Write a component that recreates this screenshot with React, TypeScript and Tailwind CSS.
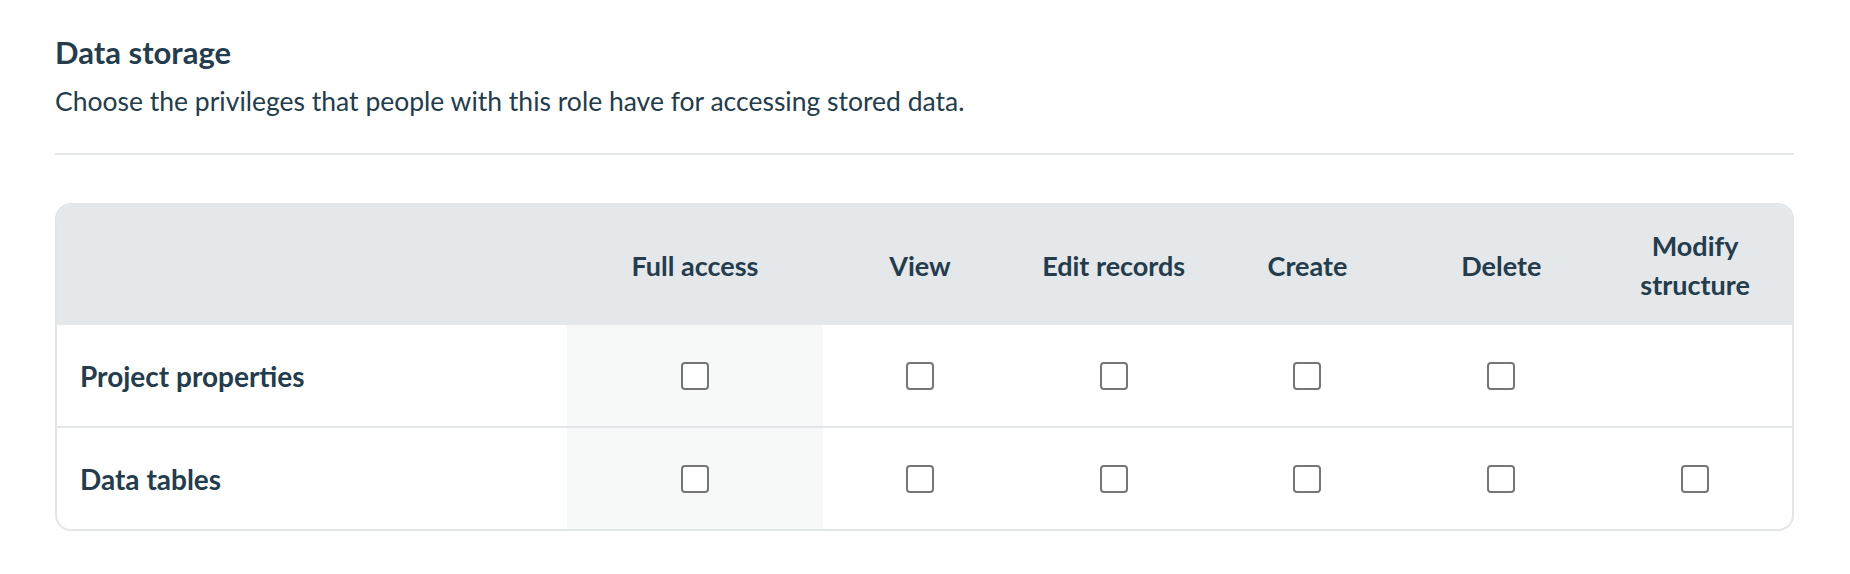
const columns = ['Full access', 'View', 'Edit records', 'Create', 'Delete', 'Modify\nstructure']

const rows = [
  { label: 'Project properties', cells: [true, true, true, true, true, false] },
  { label: 'Data tables', cells: [true, true, true, true, true, true] },
]

function Checkbox() {
  return (
    <span className="block w-[28px] h-[28px] rounded-[4px] border-2 border-[#767676] bg-white" />
  )
}

export default function App() {
  return (
    <div
      className="min-h-screen bg-white pl-[55px] pt-[32px] text-[#243c4b]"
      style={{ fontFamily: 'Lato, "Open Sans", sans-serif' }}
    >
      <div className="w-[1739px]">
        <h2 className="text-[31px] leading-[40px] font-bold">Data storage</h2>
        <p className="mt-[13px] text-[26.5px] leading-[32px]">
          Choose the privileges that people with this role have for accessing stored data.
        </p>
        <div className="mt-[36px] h-[2px] bg-[#e5e8eb]" />

        <div className="mt-[48px] rounded-[16px] border-2 border-[#e3e6e9] overflow-hidden">
          <div className="grid grid-cols-[510px_256px_repeat(5,1fr)] bg-[#e4e8eb] h-[120px]">
            <div />
            {columns.map((c) => (
              <div
                key={c}
                className="flex items-center justify-center text-center whitespace-pre-line text-[27px] leading-[39px] font-bold"
              >
                {c}
              </div>
            ))}
          </div>
          {rows.map((r, i) => (
            <div
              key={r.label}
              className={`grid grid-cols-[510px_256px_repeat(5,1fr)] h-[101px] ${
                i < rows.length - 1 ? 'border-b-2 border-[#e3e6e9] box-content' : ''
              }`}
            >
              <div className="flex items-center pl-[23px] text-[28px] font-bold">{r.label}</div>
              {r.cells.map((on, j) => (
                <div
                  key={j}
                  className={`flex items-center justify-center ${j === 0 ? 'bg-[#f7f8f8]' : ''}`}
                >
                  {on && <Checkbox />}
                </div>
              ))}
            </div>
          ))}
        </div>
      </div>
    </div>
  )
}
